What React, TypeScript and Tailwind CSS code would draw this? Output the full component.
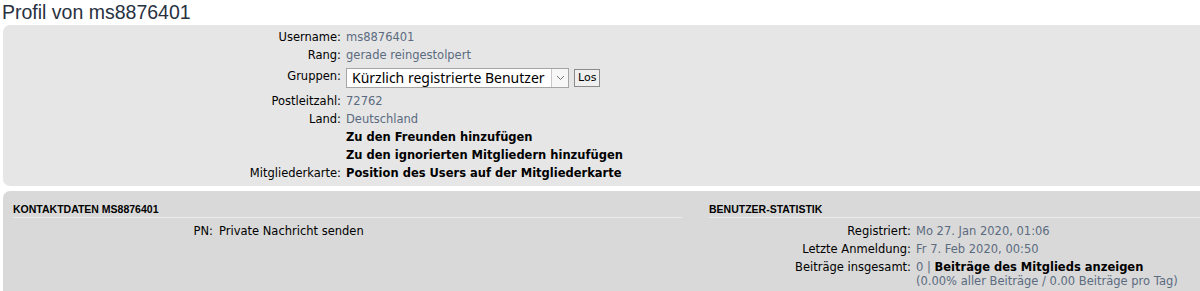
import React from "react";

const font = { fontFamily: '"DejaVu Sans", Verdana, sans-serif' };

function Row({ label, children, labelW = "w-[338px]" }: { label?: string; children: React.ReactNode; labelW?: string }) {
  return (
    <div className="flex items-start leading-[14px] py-[2px]">
      <div className={`${labelW} shrink-0 text-right text-[#000]`}>{label ?? "\u00a0"}</div>
      <div className="ml-[5px] text-[#5b6b80]">{children}</div>
    </div>
  );
}

export default function App() {
  return (
    <div className="w-[1200px] h-[291px] overflow-hidden bg-white">
      <div className="w-[1400px] pl-[3px]" style={font}>
        <h2
          className="text-[19.5px] leading-[24px] text-[#28313f] -ml-[1px] mb-[1px]"
          style={{ fontFamily: '"Liberation Sans", Arial, sans-serif' }}
        >
          Profil von ms8876401
        </h2>

        <div className="bg-[#e6e6e6] rounded-[7px] w-[1385px] pt-[3px] pb-[4px] text-[11.5px]">
          <Row label="Username:">ms8876401</Row>
          <Row label="Rang:">gerade reingestolpert</Row>
          <div className="flex items-start py-[4px]">
            <div className="w-[338px] shrink-0 text-right leading-[14px] pt-[1px] text-black">Gruppen:</div>
            <div className="ml-[5px] flex items-center gap-[5px]">
              <div
                className="w-[223px] h-[20px] bg-white border border-[#a5a5a5] flex items-center justify-between"
                style={{ fontFamily: '"Noto Sans", "Open Sans", sans-serif' }}
              >
                <span className="pl-[5px] text-[14px] leading-[18px] text-black">Kürzlich registrierte Benutzer</span>
                <div className="w-[17px] h-[18px] border-l border-[#c8c8c8] bg-[#f7f7f7] flex items-center justify-center">
                  <svg width="9" height="6" viewBox="0 0 9 6">
                    <path d="M1 1 L4.5 4.5 L8 1" fill="none" stroke="#777" strokeWidth="1" />
                  </svg>
                </div>
              </div>
              <div className="h-[18px] px-[3px] border border-[#8a8a8a] bg-[#efefef] text-[11px] leading-[16px] text-black">
                Los
              </div>
            </div>
          </div>
          <Row label="Postleitzahl:">72762</Row>
          <Row label="Land:">Deutschland</Row>
          <Row>
            <span className="font-bold text-black">Zu den Freunden hinzufügen</span>
          </Row>
          <Row>
            <span className="font-bold text-black">Zu den ignorierten Mitgliedern hinzufügen</span>
          </Row>
          <Row label="Mitgliederkarte:">
            <span className="font-bold text-black">Position des Users auf der Mitgliederkarte</span>
          </Row>
        </div>

        <div className="mt-[5px] bg-[#d9d9d9] rounded-[7px] w-[1385px] h-[120px] px-[10px] pt-[11px] text-[11.5px] flex justify-between">
          <div className="w-[669px]">
            <h3
              className="text-[10.5px] leading-[14px] font-bold uppercase text-black border-b border-[#ececec] pb-[1px]"
              style={{ fontFamily: '"Liberation Sans", Arial, sans-serif' }}
            >
              Kontaktdaten ms8876401
            </h3>
            <div className="pt-[4px]">
              <div className="flex items-start leading-[14px] py-[2px]">
                <div className="w-[200px] shrink-0 text-right text-black">PN:</div>
                <div className="ml-[6px] text-black">Private Nachricht senden</div>
              </div>
            </div>
          </div>
          <div className="w-[669px]">
            <h3
              className="text-[10.5px] leading-[14px] font-bold uppercase text-black border-b border-[#ececec] pb-[1px]"
              style={{ fontFamily: '"Liberation Sans", Arial, sans-serif' }}
            >
              Benutzer-Statistik
            </h3>
            <div className="pt-[4px]">
              <Row label="Registriert:" labelW="w-[202px]">Mo 27. Jan 2020, 01:06</Row>
              <Row label="Letzte Anmeldung:" labelW="w-[202px]">Fr 7. Feb 2020, 00:50</Row>
              <Row label="Beiträge insgesamt:" labelW="w-[202px]">
                <div>
                  0 | <span className="font-bold text-black">Beiträge des Mitglieds anzeigen</span>
                </div>
                <div>(0.00% aller Beiträge / 0.00 Beiträge pro Tag)</div>
              </Row>
            </div>
          </div>
        </div>
      </div>
    </div>
  );
}
